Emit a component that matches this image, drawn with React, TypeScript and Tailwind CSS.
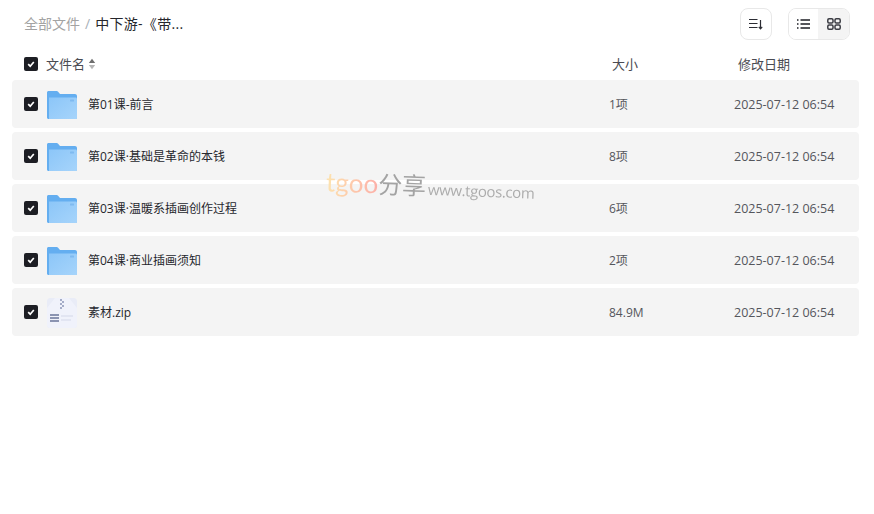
import React from 'react';

interface FileRow {
  name: string;
  size: string;
  zip?: boolean;
}

const FILES: FileRow[] = [
  { name: '第01课-前言', size: '1项' },
  { name: '第02课·基础是革命的本钱', size: '8项' },
  { name: '第03课·温暖系插画创作过程', size: '6项' },
  { name: '第04课·商业插画须知', size: '2项' },
  { name: '素材.zip', size: '84.9M', zip: true },
];

const Checkbox = () => (
  <span className="flex h-[14px] w-[14px] shrink-0 items-center justify-center rounded-[2px] bg-[#1d1e24]">
    <svg width="10" height="10" viewBox="0 0 10 10" fill="none">
      <path d="M2.2 5.2 4.2 7.2 7.8 3" stroke="#fff" strokeWidth="1.7" />
    </svg>
  </span>
);

const FolderIcon = () => (
  <svg width="30" height="28" viewBox="0 0 30 28" className="shrink-0">
    <defs>
      <linearGradient id="folderFront" x1="0" y1="0" x2="1" y2="1">
        <stop offset="0" stopColor="#8cc6f8" />
        <stop offset="1" stopColor="#a6d4fb" />
      </linearGradient>
    </defs>
    <path d="M0 1.5C0 .7.7 0 1.5 0h8.200c.5 0 .9.2 1.200.6L13 3h15c1 0 2 .9 2 2v21.500c0 .8-.7 1.500-1.500 1.500h-27C.7 28 0 27.300 0 26.500Z" fill="#64aef0" />
    <path d="M2 6.500h26.500c.8 0 1.500.7 1.500 1.500v18.500c0 .8-.7 1.500-1.500 1.500H2Z" fill="url(#folderFront)" />
    <rect x="23" y="8.500" width="4" height="2" rx=".5" fill="#7fbaf0" />
  </svg>
);

const ZipIcon = () => (
  <svg width="30" height="30" viewBox="0 0 30 30" className="shrink-0">
    <path d="M3 0h24c1.500 0 3 1.500 3 3v24c0 1.700-1.300 3-3 3H3c-1.700 0-3-1.300-3-3V3C0 1.500 1.500 0 3 0Z" fill="#e9ecf7" />
    <path d="M0 10 8 0h14l8 10v17c0 1.700-1.300 3-3 3H3c-1.700 0-3-1.300-3-3Z" fill="#f0f2fb" />
    <path d="M13 1h2v2h-2zM15 3h2v2h-2zM13 5h2v2h-2zM15 7h2v2h-2zM13 9h2v2h-2z" fill="#a4acc8" />
    <path d="M3 16h9v2H3zM3 19h9v2H3zM3 22h9v2H3z" fill="#8b94b2" />
    <path d="M14 17h12v2H14zM14 21h10v2H14z" fill="#e2e5f2" />
  </svg>
);

const Watermark = () => (
  <div className="pointer-events-none absolute left-[326px] top-[169px] flex rotate-[2deg] items-baseline whitespace-nowrap opacity-90">
    <span className="bg-gradient-to-r from-[#fde2a8] to-[#fda8a0] bg-clip-text font-['Lato'] text-[26px] leading-[32px] text-transparent">
      tgoo
    </span>
    <span className="text-[24px] leading-[32px] text-[#9b9b9b]">分享</span>
    <span className="ml-[2px] font-['Open_Sans'] text-[15px] leading-[32px] tracking-[-0.4px] text-[#a5a5a5]">www.tgoos.com</span>
  </div>
);

export default function App() {
  return (
    <div className="relative h-[514px] w-[874px] overflow-hidden bg-white font-['Open_Sans','Noto_Sans_CJK_SC',sans-serif]">
      <div className="flex h-[48px] items-center pb-[1px] pl-[24px] pr-[24px]">
        <span className="text-[14px] text-[#a3a3a3]">全部文件</span>
        <span className="mx-[5px] text-[14px] text-[#a8b0b8]">/</span>
        <span className="text-[14px] tracking-[0.3px] text-[#25262b]">中下游-《带...</span>
        <div className="ml-auto flex items-center gap-[16px]">
          <button className="flex h-[32px] w-[32px] items-center justify-center rounded-[8px] border border-[#e8e8e8] bg-white">
            <svg width="14" height="12" viewBox="0 0 14 12" fill="none" stroke="#2b2c33" strokeWidth="1.2">
              <path d="M0 1.500h8.500M0 5.500h8.500M0 9.500h8.500M11.500 2v8.500" />
              <path d="M9.800 8.800 11.500 10.800 13.200 8.800" />
            </svg>
          </button>
          <div className="flex h-[32px] w-[62px] overflow-hidden rounded-[8px] border border-[#e8e8e8]">
            <span className="flex w-[29px] items-center justify-center bg-white">
              <svg width="13" height="10" viewBox="0 0 13 10" fill="none" stroke="#1d1e24" strokeWidth="1.3">
                <path d="M0 1h1.500M3.500 1H13M0 5h1.500M3.500 5H13M0 9h1.500M3.500 9H13" />
              </svg>
            </span>
            <span className="flex flex-1 items-center justify-center bg-[#f4f4f4]">
              <svg width="14" height="12" viewBox="0 0 14 12" fill="none" stroke="#3c3d44" strokeWidth="1.5">
                <rect x=".8" y=".8" width="5.200" height="4.200" rx="1.200" />
                <rect x="8" y=".8" width="5.200" height="4.200" rx="1.200" />
                <rect x=".8" y="7" width="5.200" height="4.200" rx="1.200" />
                <rect x="8" y="7" width="5.200" height="4.200" rx="1.200" />
              </svg>
            </span>
          </div>
        </div>
      </div>

      <div className="flex h-[32px] items-center pl-[24px] text-[13px] text-[#4a4b52]">
        <Checkbox />
        <span className="ml-[8px] pt-[2px]">文件名</span>
        <svg width="8" height="12" viewBox="0 0 8 12" className="ml-[3px]">
          <path d="M4 .8 7.200 5H.8Z" fill="#6d6d6d" />
          <path d="M4 11.200 .8 7h6.400Z" fill="#b5b5b5" />
        </svg>
        <span className="ml-[516px] w-[126px] pt-[2px]">大小</span>
        <span className="pt-[2px]">修改日期</span>
      </div>

      <div className="flex flex-col gap-[4px] pl-[12px] pr-[15px]">
        {FILES.map((file) => (
          <div key={file.name} className="flex h-[48px] items-center rounded-[4px] bg-[#f4f4f4] pl-[12px] text-[12px] text-[#3c3d44]">
            <Checkbox />
            <span className="ml-[9px] flex w-[30px] justify-center pt-[2px]">{file.zip ? <ZipIcon /> : <FolderIcon />}</span>
            <span className="ml-[11px] w-[521px] pt-[2px] text-[#26272d]">{file.name}</span>
            <span className="w-[125px] pt-[2px] text-[#55565c]">{file.size}</span>
            <span className="pt-[2px] text-[12.5px] text-[#55565c]">2025-07-12 06:54</span>
          </div>
        ))}
      </div>

      <Watermark />
    </div>
  );
}
